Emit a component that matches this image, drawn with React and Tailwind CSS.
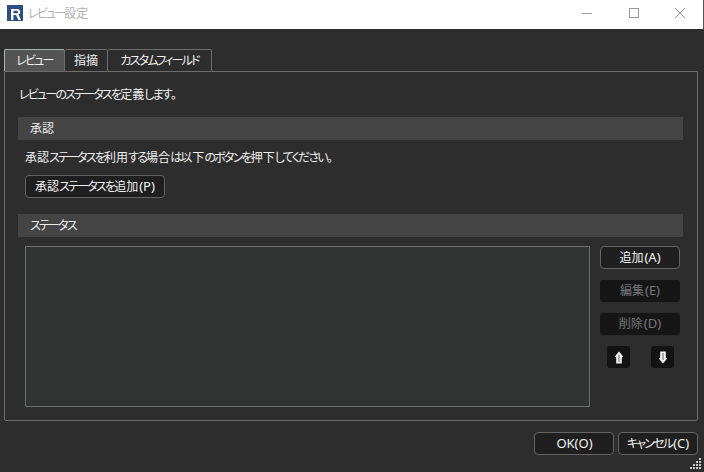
const font = { fontFamily: '"Noto Sans", "Noto Sans CJK JP", sans-serif', fontFeatureSettings: '"palt"' }

// The reference font has narrow kana and slightly larger latin, kanji stay full width
function Jp({ text }) {
  const runs = text.split(/([\u3040-\u30ff]+|[\x20-\x7e]+)/).filter(Boolean)
  return (
    <span className="whitespace-nowrap">
      {runs.map((run, i) => {
        if (/^[\u3040-\u30ff]/.test(run)) {
          return <span key={i} className="tracking-[-1.8px]">{run}</span>
        }
        if (/^[\x20-\x7e]/.test(run)) {
          return <span key={i} className="ml-[1px] text-[13px]">{run}</span>
        }
        return <span key={i}>{run}</span>
      })}
    </span>
  )
}

function Btn({ text, className = '', disabled = false }) {
  if (disabled) {
    return (
      <div className={`flex h-[22px] items-center justify-center rounded-[3px] bg-[#161616] text-[12px] text-[#77777c] ${className}`}>
        <Jp text={text} />
      </div>
    )
  }
  return (
    <div className={`flex h-[23px] items-center justify-center rounded-[4px] border border-[#646464] bg-[#1f1f1f] text-[12px] text-[#f2f2f2] ${className}`}>
      <Jp text={text} />
    </div>
  )
}

function Tab({ text, active = false, className = '' }) {
  return (
    <div
      className={`flex h-[22px] items-center justify-center rounded-t-[2px] border border-b-0 border-[#6e6e6e] text-[12px] text-[#f0f0f0] ${
        active ? 'border-t-[#a9b5b1] border-l-[#a9b5b1] bg-[#545454]' : 'bg-[#2d2d2d]'
      } ${className}`}
    >
      <Jp text={text} />
    </div>
  )
}

function SectionBar({ text }) {
  return (
    <div className="flex h-[23px] items-center bg-[#444444] pl-[12px] text-[12px] text-[#ececec]">
      <Jp text={text} />
    </div>
  )
}

function ArrowIcon({ down = false }) {
  return (
    <div className="flex h-[22px] w-[23px] items-center justify-center rounded-[3px] bg-[#131313]">
      <svg width="10" height="13" viewBox="0 0 10 13" className={down ? 'rotate-180' : ''}>
        <path d="M5 .5 9.2 5.4 7.8 6.5V12.5H2.2V6.5L.8 5.4Z" fill="#f2f2f2" />
        <path d="M5 4v7" stroke="#8a8a8a" strokeWidth="1.4" />
      </svg>
    </div>
  )
}

export default function App() {
  return (
    <div className="flex h-[472px] w-[704px] flex-col overflow-hidden bg-[#2d2d2d]" style={font}>
      {/* title bar */}
      <div className="flex h-[29px] shrink-0 items-center border-r border-[#555555] bg-white pl-[7px]">
        <svg width="16" height="16" viewBox="0 0 16 16" className="mb-[3px]">
          <rect width="16" height="16" fill="#2d4d85" />
          <path d="M4 4h6.4a2.9 2.9 0 0 1 1 5.6L14 15h-2.6L9 10H6.4v5H4Zm2.4 1.7v2.6h3.3a1.3 1.3 0 0 0 0-2.6Z" fill="#fff" />
        </svg>
        <span className="mb-[1px] ml-[5px] text-[12px] text-[#b0b0b0]">
          <Jp text="レビュー設定" />
        </span>
        <div className="mb-[3px] ml-auto flex items-center">
          <svg width="12" height="12" viewBox="0 0 12 12" className="mr-[34px]">
            <path d="M0 6.5h10" stroke="#999" />
          </svg>
          <svg width="12" height="12" viewBox="0 0 12 12" className="mr-[34px]">
            <rect x="1.5" y="1.5" width="9" height="9" fill="none" stroke="#999" />
          </svg>
          <svg width="12" height="12" viewBox="0 0 12 12" className="mr-[17px]">
            <path d="M1 1l10 10M11 1 1 11" stroke="#999" />
          </svg>
        </div>
      </div>

      {/* tabs */}
      <div className="mt-[20px] flex pl-[4px]">
        <Tab active text="レビュー" className="w-[61px]" />
        <Tab text="指摘" className="w-[43px] border-l-0" />
        <Tab text="カスタムフィールド" className="w-[104px] border-l-0" />
      </div>

      {/* pane */}
      <div className="ml-[4px] mr-[6px] flex h-[350px] flex-col rounded-b-[2px] border border-[#6e6e6e] pl-[13px] pr-[14px]">
        <p className="mt-[14px] h-[18px] pl-[1px] text-[12px] leading-[18px] text-[#f0f0f0]">
          <Jp text="レビューのステータスを定義します。" />
        </p>
        <div className="mt-[13px]">
          <SectionBar text="承認" />
        </div>
        <p className="mt-[9px] h-[18px] pl-[7px] text-[12px] leading-[18px] text-[#f0f0f0]">
          <Jp text="承認ステータスを利用する場合は以下のボタンを押下してください。" />
        </p>
        <div className="mt-[8px] pl-[7px]">
          <Btn text="承認ステータスを追加(P)" className="w-[140px]" />
        </div>
        <div className="mt-[16px]">
          <SectionBar text="ステータス" />
        </div>
        <div className="mt-[9px] flex pl-[7px]">
          <div className="h-[161px] w-[565px] border border-[#6e6e6e] bg-[#323433]" />
          <div className="ml-[10px] flex w-[80px] flex-col">
            <Btn text="追加(A)" />
            <Btn disabled text="編集(E)" className="mt-[11px]" />
            <Btn disabled text="削除(D)" className="mt-[11px]" />
            <div className="mt-[11px] flex justify-between pl-[7px] pr-[6px]">
              <ArrowIcon />
              <ArrowIcon down />
            </div>
          </div>
        </div>
      </div>

      {/* footer */}
      <div className="relative mt-[11px] flex justify-end gap-[4px] pr-[6px]">
        <Btn text="OK(O)" className="w-[80px]" />
        <Btn text="キャンセル(C)" className="w-[80px]" />
      </div>
      <svg width="12" height="12" viewBox="0 0 12 12" className="absolute left-[690px] top-[457px]">
        <path d="M9 1h2v2H9zM6 4h2v2H6zM9 4h2v2H9zM3 7h2v2H3zM6 7h2v2H6zM9 7h2v2H9zM0 10h2v2H0zM3 10h2v2H3zM6 10h2v2H6zM9 10h2v2H9z" fill="#c8c8c8" />
      </svg>
    </div>
  )
}
